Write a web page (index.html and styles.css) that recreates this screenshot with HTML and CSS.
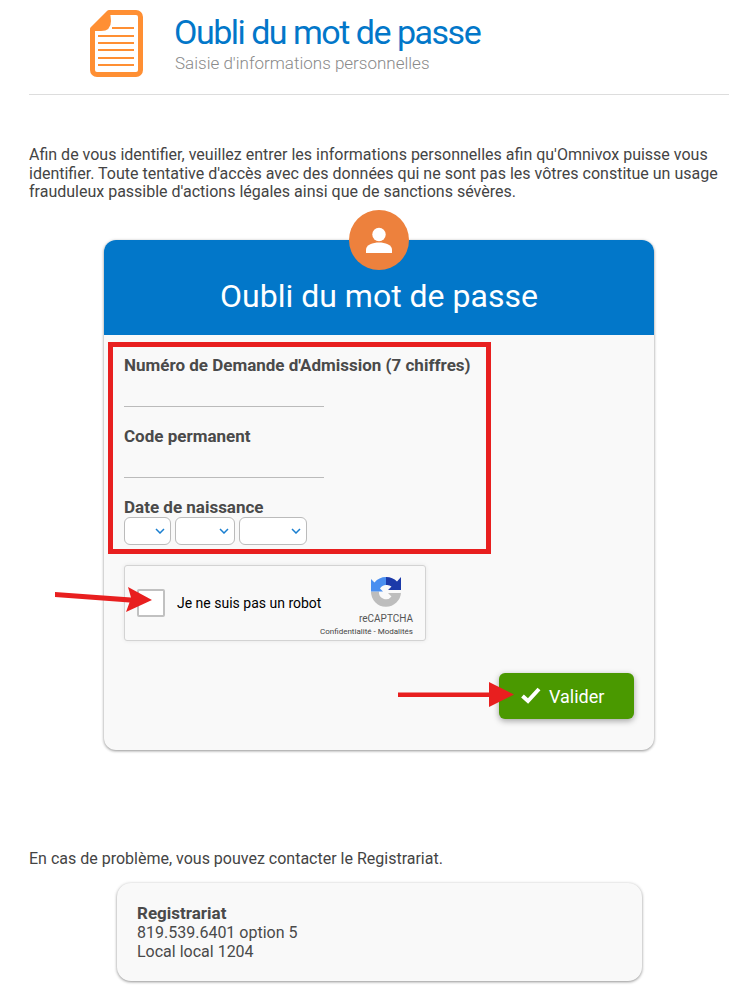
FILE: index.html
```html
<!DOCTYPE html>
<html lang="fr">
<head>
  <meta charset="UTF-8">
  <meta name="viewport" content="width=device-width, initial-scale=1.0">
  <title>Oubli du mot de passe</title>
  <link rel="stylesheet" href="styles.css">
</head>
<body>
  <header class="page-header">
    <svg class="doc-icon" width="53" height="67" viewBox="0 0 53 67">
      <path d="M19 2.500H46A4.500 4.500 0 0 1 50.500 7V60A4.500 4.500 0 0 1 46 64.500H7A4.500 4.500 0 0 1 2.500 60V19Z" fill="#fff" stroke="#ff8f33" stroke-width="5" stroke-linejoin="round"/>
      <path d="M1 21 20 1 21 11Q21 21 11 21Z" fill="#ff8f33"/>
      <path d="M22 18H44M8 26H44M8 33H44M8 40H44M8 48H44M8 55H44" stroke="#ff8f33" stroke-width="2" fill="none"/>
    </svg>
    <div class="page-titles">
      <h1>Oubli du mot de passe</h1>
      <p>Saisie d'informations personnelles</p>
    </div>
  </header>

  <p class="intro">Afin de vous identifier, veuillez entrer les informations personnelles afin qu'Omnivox puisse vous identifier. Toute tentative d'accès avec des données qui ne sont pas les vôtres constitue un usage frauduleux passible d'actions légales ainsi que de sanctions sévères.</p>

  <!-- Formulaire principal -->
  <div class="card">
    <div class="card-head">
      <div class="avatar">
        <svg width="28" height="28" viewBox="0 0 28 28">
          <circle cx="14" cy="8.500" r="6.700" fill="#fff"/>
          <path d="M1 27V23.500C1 19 8 16.500 14 16.500S27 19 27 23.500V27Z" fill="#fff"/>
        </svg>
      </div>
      <h2>Oubli du mot de passe</h2>
    </div>
    <form class="card-body">
      <div class="fields-box">
        <label for="numero">Numéro de Demande d'Admission (7 chiffres)</label>
        <input type="text" id="numero">
        <label for="code">Code permanent</label>
        <input type="text" id="code">
        <label class="date-label">Date de naissance</label>
        <div class="date-row">
          <select class="sel-day"></select>
          <select class="sel-month"></select>
          <select class="sel-year"></select>
        </div>
      </div>

      <div class="captcha">
        <span class="captcha-box"></span>
        <span class="captcha-text">Je ne suis pas un robot</span>
        <div class="captcha-brand">
          <svg width="32" height="32" viewBox="0 0 32 32">
            <path d="M1 15.500H9A7 7 0 0 0 21.500 20.500L18 17H31V16A15 15 0 0 1 1 15.500Z" fill="#bdbdbd"/>
            <path d="M16 1V9A7 7 0 0 0 10 12.500L13 15.500H1V3L4.500 6.500A15 15 0 0 1 16 1Z" fill="#4a8ff0"/>
            <path d="M16 1A15 15 0 0 1 27 5.500L31 1V14H18L21.500 10.500A7 7 0 0 0 16 9Z" fill="#1c3aa9"/>
          </svg>
          <div class="captcha-name">reCAPTCHA</div>
          <div class="captcha-links">Confidentialité - Modalités</div>
        </div>
      </div>

      <div class="actions">
        <button type="button" class="btn-valider">
          <svg width="20" height="18" viewBox="0 0 20 18">
            <path d="M1.500 9 7 14 18 2" fill="none" stroke="#fff" stroke-width="4"/>
          </svg>
          Valider
        </button>
      </div>
    </form>
  </div>

  <p class="help">En cas de problème, vous pouvez contacter le Registrariat.</p>

  <div class="contact">
    <strong>Registrariat</strong><br>
    819.539.6401 option 5<br>
    Local local 1204
  </div>

  <!-- Flèches rouges par-dessus la capture -->
  <svg class="arrow arrow-captcha" width="100" height="30" viewBox="0 0 100 30">
    <path d="M0 5 76 10.500 73 0 97 13 71 25 74.500 15.500 0 10Z" fill="#e81f1f"/>
  </svg>
  <svg class="arrow arrow-valider" width="118" height="26" viewBox="0 0 118 26">
    <path d="M0 10.500H91V0L116 12.500 91 25V15H0Z" fill="#e81f1f"/>
  </svg>
</body>
</html>
```

FILE: styles.css
```css
* {
  margin: 0;
  padding: 0;
  box-sizing: border-box;
  font-family: Roboto, Arial, sans-serif;
}
body {
  position: relative;
  height: 997px;
  overflow: hidden;
  padding: 0 13px 0 29px;
  background: white;
  color: #4a4a4a;
  font-size: 16px;
}
.page-header {
  display: flex;
  align-items: flex-start;
  height: 95px;
  padding: 10px 0 0 61px;
  border-bottom: 1px solid #ddd;
}
.doc-icon {
  flex: none;
}
.page-titles {
  margin-left: 32px;
}
.page-titles h1 {
  margin-left: -1px;
  font-size: 34px;
  line-height: 44px;
  font-weight: 400;
  letter-spacing: -1.500px;
  color: #0277c9;
}
.page-titles p {
  font-size: 17px;
  line-height: 19px;
  font-weight: 300;
  color: #8a8a8a;
}
.intro {
  height: 56px;
  margin-top: 51px;
  line-height: 18.500px;
  color: #444;
}
.card {
  width: 550px;
  height: 510px;
  margin: 38px 0 0 75px;
  background: #f9f9f9;
  border-radius: 12px;
  box-shadow: 0 1px 3px rgba(0,0,0,0.4), 0 0 4px rgba(0,0,0,0.06);
}
.card-head {
  position: relative;
  height: 95px;
  background: #0277c9;
  border-radius: 12px 12px 0 0;
  color: white;
  text-align: center;
}
.card-head h2 {
  padding-top: 37px;
  font-size: 32px;
  line-height: 38px;
  font-weight: 400;
}
.avatar {
  position: absolute;
  top: -30px;
  left: 245px;
  display: flex;
  align-items: center;
  justify-content: center;
  width: 60px;
  height: 60px;
  border-radius: 50%;
  background: #ed813d;
}
.card-body {
  padding: 7px 20px 0 4px;
}
.fields-box {
  width: 383px;
  height: 212px;
  padding: 9px 11px 0;
  border: 5px solid #e81f1f;
}
.fields-box label {
  display: block;
  font-size: 17px;
  line-height: 19px;
  font-weight: 700;
}
.fields-box input {
  display: block;
  width: 200px;
  height: 31px;
  margin: 1px 0 20px;
  border: none;
  border-bottom: 1px solid #bbb;
  background: transparent;
}
.date-row {
  display: flex;
  gap: 4px;
}
.date-row select {
  height: 28px;
  appearance: none;
  border: 1px solid #bbb;
  border-radius: 6px;
  background: white url("data:image/svg+xml,%3Csvg xmlns='http://www.w3.org/2000/svg' width='10' height='6'%3E%3Cpath d='M1 1l4 4 4-4' fill='none' stroke='%231a7fd0' stroke-width='1.500'/%3E%3C/svg%3E") no-repeat right 5px center;
}
.sel-day { width: 47px; }
.sel-month { width: 60px; }
.sel-year { width: 68px; }
.captcha {
  display: flex;
  align-items: center;
  width: 302px;
  height: 76px;
  margin: 11px 0 0 16px;
  padding-left: 12px;
  background: #f9f9f9;
  border: 1px solid #d3d3d3;
  border-radius: 3px;
  box-shadow: 0 0 4px rgba(0,0,0,0.08);
}
.captcha-box {
  flex: none;
  width: 28px;
  height: 28px;
  border: 2px solid #c1c1c1;
  border-radius: 2px;
  background: white;
}
.captcha-text {
  margin-left: 12px;
  font-size: 14px;
  white-space: nowrap;
  color: #000;
}
.captcha-brand {
  flex: none;
  align-self: flex-start;
  width: 88px;
  margin: 10px 12px 0 auto;
  text-align: right;
  color: #555;
}
.captcha-brand svg {
  display: block;
  margin: 0 11px 4px auto;
}
.captcha-name {
  font-size: 10px;
  line-height: 14px;
}
.captcha-links {
  margin-left: -6px;
  font-size: 8px;
  line-height: 11px;
  white-space: nowrap;
  color: #444;
}
.actions {
  display: flex;
  justify-content: flex-end;
  margin-top: 32px;
}
.btn-valider {
  display: flex;
  align-items: center;
  gap: 8px;
  width: 135px;
  height: 46px;
  padding-left: 22px;
  border: none;
  border-radius: 6px;
  background: #4a9900;
  color: white;
  font-size: 18px;
  box-shadow: 0 2px 6px rgba(0,0,0,0.35);
}
.help {
  margin-top: 99px;
  line-height: 19px;
  color: #444;
}
.contact {
  width: 525px;
  height: 98px;
  margin: 15px 0 0 88px;
  padding: 21px 20px;
  background: #f9f9f9;
  border-radius: 14px;
  box-shadow: 0 1px 3px rgba(0,0,0,0.4), 0 0 4px rgba(0,0,0,0.06);
  line-height: 19px;
}
.contact strong {
  font-size: 17px;
}
.arrow {
  position: absolute;
}
.arrow-captcha {
  left: 55px;
  top: 587px;
}
.arrow-valider {
  left: 398px;
  top: 682px;
}
```
